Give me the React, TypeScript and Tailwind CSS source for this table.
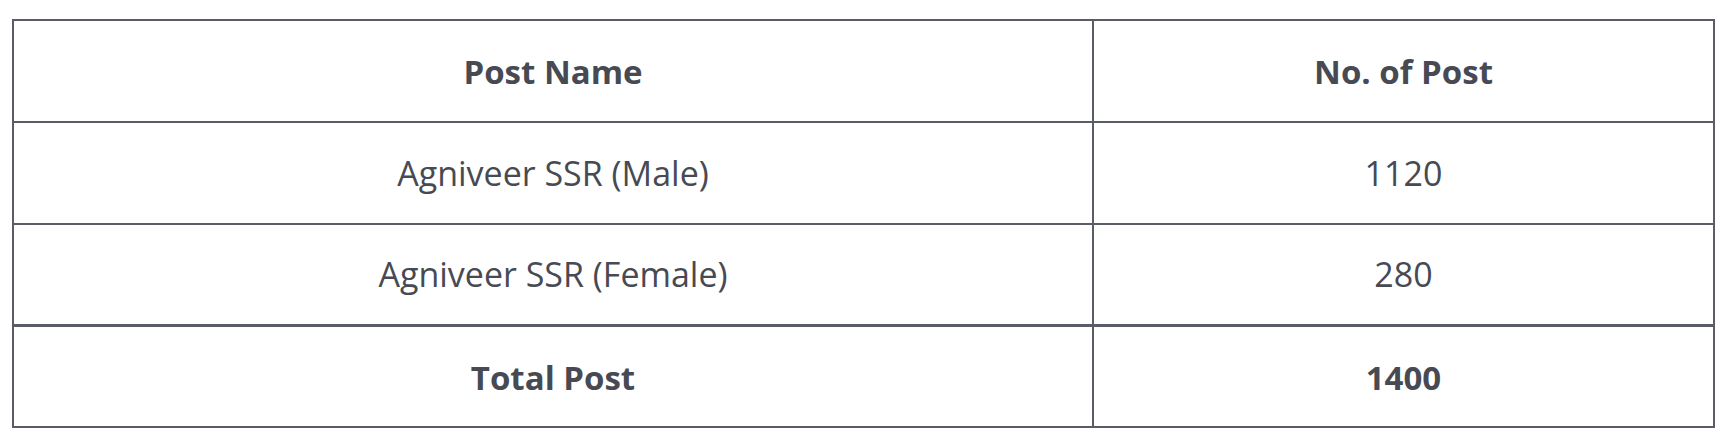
export default function App() {
  const font = { fontFamily: '"Open Sans", "Noto Sans", sans-serif' };
  const cell = "border-2 border-[#5a5d65] text-center align-middle";
  return (
    <div className="bg-white w-[1718px] h-[447px] pt-[19px] pl-[12px]" style={font}>
      <table className="border-collapse w-[1703px] text-[#474a53] text-[34px]">
        <tbody>
          <tr className="h-[102px]">
            <th className={`${cell} w-[1080px] font-bold text-[33px] pt-[2px]`}>Post Name</th>
            <th className={`${cell} font-bold text-[33px] pt-[2px]`}>No. of Post</th>
          </tr>
          <tr className="h-[102px]">
            <td className={cell}>Agniveer SSR (Male)</td>
            <td className={cell}>1120</td>
          </tr>
          <tr className="h-[101px]">
            <td className={cell}>Agniveer SSR (Female)</td>
            <td className={cell}>280</td>
          </tr>
          <tr className="h-[102px]">
            <td className={`${cell} border-t-[3px] font-bold text-[33px] pt-[2px]`}>Total Post</td>
            <td className={`${cell} border-t-[3px] font-bold text-[33px] pt-[2px]`}>1400</td>
          </tr>
        </tbody>
      </table>
    </div>
  );
}
